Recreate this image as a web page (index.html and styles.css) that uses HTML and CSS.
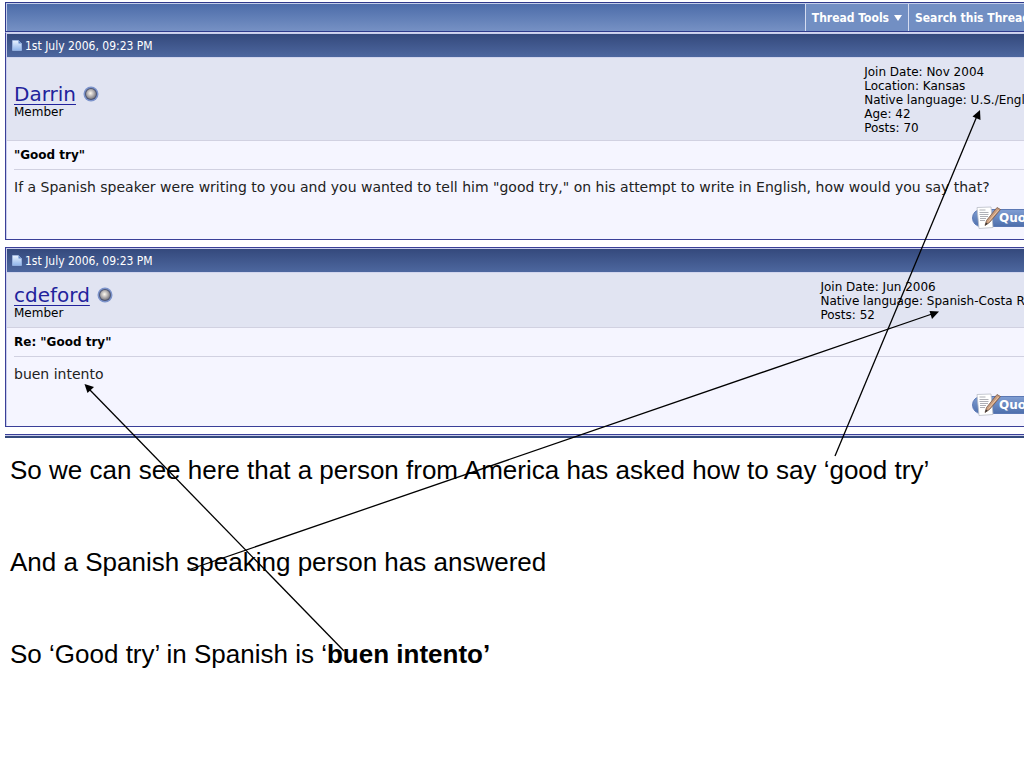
FILE: index.html
```html
<!DOCTYPE html>
<html lang="en">
  <head>
    <meta charset="UTF-8" />
    <title>Good try - Forum thread</title>
    <link rel="stylesheet" href="styles.css">
  </head>
  <body>
    <svg class="defs" width="0" height="0" aria-hidden="true">
      <defs>
        <radialGradient id="orb" cx="0.45" cy="0.42" r="0.6">
          <stop offset="0" stop-color="#fffaf0" />
          <stop offset="0.4" stop-color="#c9c5c4" />
          <stop offset="1" stop-color="#77757c" />
        </radialGradient>
        <linearGradient id="sheet" x1="0" y1="0" x2="0" y2="1">
          <stop offset="0" stop-color="#e8f2ff" />
          <stop offset="1" stop-color="#8fb4ea" />
        </linearGradient>
        <symbol id="post-icon" viewBox="0 0 10 11">
          <path d="M0.5 0.5h6l3 3v7h-9z" fill="url(#sheet)" stroke="#a9c5f0" stroke-width="0.6" />
          <path d="M6.5 0.5v3h3z" fill="#5f86c8" />
        </symbol>
        <symbol id="offline" viewBox="0 0 16 16">
          <circle cx="8" cy="8" r="7.5" fill="#7c93cb" />
          <circle cx="8" cy="8" r="6" fill="#4d5674" />
          <circle cx="8" cy="8" r="5" fill="url(#orb)" />
        </symbol>
        <symbol id="note" viewBox="0 0 28 24">
          <path d="M4 1.5l14-0.5 2 20.500-14 1z" fill="#fff" stroke="#b9bcc6" stroke-width="0.8" />
          <path d="M6.500 4h6M6.500 6.500h9M6.500 8.500h9M7 10.500h8M7 12.500h6M7 14.500h5" stroke="#9a9ca4" stroke-width="0.8" />
          <path d="M24 1.500l3.500 2-11 13-4.500 3 1.500-5z" fill="#c99c7c" stroke="#77594a" stroke-width="0.8" />
          <path d="M25.500 4l-10 11.500" stroke="#edc9a8" stroke-width="1" />
          <path d="M12 19.500l1-3 1.800 1.200z" fill="#333" />
        </symbol>
      </defs>
    </svg>

    <div class="forum">
      <nav class="toolbar">
        <a class="tool" href="#">Thread Tools <span class="caret"></span></a>
        <a class="tool" href="#">Search this Thread <span class="caret"></span></a>
      </nav>

      <article class="post first">
        <header class="date"><svg class="post-icon"><use href="#post-icon" /></svg>1st July 2006, 09:23 PM</header>
        <div class="user">
          <div>
            <div class="name"><a href="#">Darrin</a><svg class="status"><use href="#offline" /></svg></div>
            <div class="rank">Member</div>
          </div>
          <div class="info">
            <div>Join Date: Nov 2004</div>
            <div>Location: Kansas</div>
            <div>Native language: U.S./English</div>
            <div>Age: 42</div>
            <div>Posts: 70</div>
          </div>
        </div>
        <div class="message">
          <h2>"Good try"</h2>
          <p>If a Spanish speaker were writing to you and you wanted to tell him "good try," on his attempt to write in English, how would you say that?</p>
          <button class="quote"><svg class="note"><use href="#note" /></svg>Quote</button>
        </div>
      </article>

      <article class="post">
        <header class="date"><svg class="post-icon"><use href="#post-icon" /></svg>1st July 2006, 09:23 PM</header>
        <div class="user">
          <div>
            <div class="name"><a href="#">cdeford</a><svg class="status"><use href="#offline" /></svg></div>
            <div class="rank">Member</div>
          </div>
          <div class="info">
            <div>Join Date: Jun 2006</div>
            <div>Native language: Spanish-Costa Rica</div>
            <div>Posts: 52</div>
          </div>
        </div>
        <div class="message">
          <h2>Re: "Good try"</h2>
          <p>buen intento</p>
          <button class="quote"><svg class="note"><use href="#note" /></svg>Quote</button>
        </div>
      </article>

      <div class="next"></div>
    </div>

    <section class="notes">
      <p>So we can see here that a person from America has asked how to say ‘good try’</p>
      <p>And a Spanish speaking person has answered</p>
      <p>So ‘Good try’ in Spanish is ‘<b>buen intento’</b></p>
    </section>

    <!-- arrows from the notes up to the posts -->
    <svg class="arrows" width="1024" height="768" aria-hidden="true">
      <g stroke="#000" stroke-width="1.3">
        <path d="M835 456L977 116" />
        <path d="M188 570L932 314" />
        <path d="M344 651L89 389" />
      </g>
      <path d="M980 110l0.500 10-8-3.500z" />
      <path d="M939 311.500l-7 7.500-2.500-8z" />
      <path d="M84.500 384l9.500 3-6.500 6z" />
    </svg>
  </body>
</html>
```

FILE: styles.css
```css
body {
  margin: 0;
  background: #fff;
  color: #000;
  font-family: Verdana, "DejaVu Sans", sans-serif;
  font-size: 12px;
  overflow: hidden;
}

.defs {
  position: absolute;
}

/* the thread runs past the right edge of the window */
.forum {
  margin: 2px -26px 0 5px;
}

.toolbar {
  display: flex;
  justify-content: flex-end;
  height: 28px;
  border: 1px solid #2f3a8c;
  box-shadow: inset 1px 1px #c3cdea;
  background: linear-gradient(#4b6ba8, #7691c4);
}

.tool {
  display: flex;
  align-items: center;
  gap: 5px;
  margin-top: 1px;
  padding: 0 6px;
  border-left: 1px solid #d5dcf0;
  background: #728fc3;
  color: #fff;
  font-family: Tahoma, "DejaVu Sans Condensed", "DejaVu Sans", sans-serif;
  font-weight: bold;
  text-decoration: none;
  white-space: nowrap;
}

.caret {
  border: 4px solid transparent;
  border-top: 6px solid #fff;
  border-bottom: 0;
}

.post {
  margin-bottom: 7px;
  border: 1px solid #3a3f98;
  background: #f5f5ff;
  box-shadow: inset 1px 1px #c9cdec;
  padding: 1px 0 0 1px;
}

.first {
  border-top: 1px solid #d1d5ee;
}

.date {
  display: flex;
  align-items: center;
  gap: 3px;
  height: 23px;
  padding-left: 5px;
  border-bottom: 1px solid #d1d5ee;
  background: linear-gradient(#34497c, #4d679f);
  color: #fff;
  font-family: Tahoma, "DejaVu Sans Condensed", "DejaVu Sans", sans-serif;
}

.post-icon {
  width: 10px;
  height: 11px;
}

.user {
  display: flex;
  justify-content: space-between;
  align-items: center;
  padding: 7px 7px 5px;
  border-bottom: 1px solid #d1d1e1;
  background: #e1e4f2;
  line-height: 14px;
}

.name {
  display: flex;
  align-items: center;
  gap: 7px;
  line-height: 24px;
}

.name a {
  color: #22229c;
  font-size: 20px;
  text-decoration-thickness: 1px;
  text-underline-offset: 3px;
}

.status {
  width: 16px;
  height: 16px;
}

.rank {
  line-height: 13px;
}

.info {
  white-space: nowrap;
}

.message {
  display: flex;
  flex-direction: column;
  padding: 0 7px 9px;
}

.message h2 {
  margin: 0;
  border-bottom: 1px solid #d1d1e1;
  font-size: 12px;
  line-height: 28px;
}

.message p {
  margin: 8px 0 11px;
  color: #222;
  font-size: 14px;
  line-height: 18px;
  white-space: nowrap;
}

.quote {
  position: relative;
  align-self: flex-end;
  width: 70px;
  height: 18px;
  margin: 2px 0 3px;
  padding: 0 0 0 26px;
  border: 1px solid #5b78b4;
  border-radius: 9px;
  background: linear-gradient(#7f9dd2, #4f70ad);
  color: #fff;
  font: bold 12px/16px Verdana, "DejaVu Sans", sans-serif;
  text-align: left;
}

.note {
  position: absolute;
  left: 0;
  top: -4px;
  width: 28px;
  height: 24px;
}

.next {
  height: 3px;
  border-top: 1px solid #3a3f98;
  background: #34497c;
  box-shadow: inset 0 1px #c9cdec;
}

.notes {
  padding: 17px 10px;
  font-family: Arial, "Liberation Sans", sans-serif;
  font-size: 26px;
  line-height: 30px;
}

.notes p {
  margin: 0 0 62px;
}

.arrows {
  position: absolute;
  left: 0;
  top: 0;
  pointer-events: none;
}
```
